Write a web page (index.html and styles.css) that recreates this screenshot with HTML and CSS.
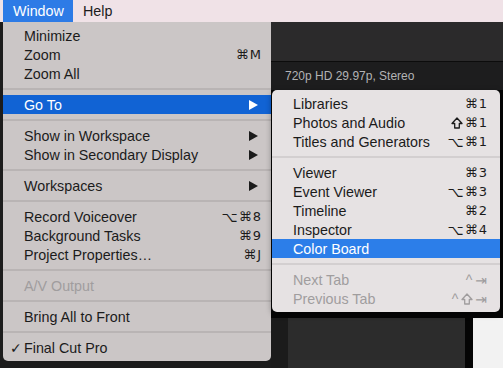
FILE: index.html
```html
<!DOCTYPE html>
<html>
<head>
<meta charset="utf-8">
<link rel="stylesheet" href="styles.css">
</head>
<body>
<div class="screen">
  <div class="menubar">
    <span class="mb-item active">Window</span>
    <span class="mb-item">Help</span>
  </div>
  <div class="app">
    <div class="edge"></div>
    <div class="main">
      <div class="toolbar"></div>
      <div class="infobar">720p HD 29.97p, Stereo</div>
      <div class="lower">
        <div class="lower-left"></div>
        <div class="viewer"></div>
        <div class="gap"></div>
        <div class="white"></div>
      </div>
    </div>
  </div>

  <div class="menu main-menu">
    <div class="row"><span class="label">Minimize</span></div>
    <div class="row"><span class="label">Zoom</span><span class="key">⌘M</span></div>
    <div class="row"><span class="label">Zoom All</span></div>
    <div class="sep"></div>
    <div class="row sel dark"><span class="label">Go To</span><span class="arrow"></span></div>
    <div class="sep"></div>
    <div class="row"><span class="label">Show in Workspace</span><span class="arrow"></span></div>
    <div class="row"><span class="label">Show in Secondary Display</span><span class="arrow"></span></div>
    <div class="sep"></div>
    <div class="row"><span class="label">Workspaces</span><span class="arrow"></span></div>
    <div class="sep"></div>
    <div class="row"><span class="label">Record Voiceover</span><span class="key"><span class="g">⌥</span>⌘8</span></div>
    <div class="row"><span class="label">Background Tasks</span><span class="key">⌘9</span></div>
    <div class="row"><span class="label">Project Properties…</span><span class="key">⌘J</span></div>
    <div class="sep"></div>
    <div class="row off"><span class="label">A/V Output</span></div>
    <div class="sep"></div>
    <div class="row"><span class="label">Bring All to Front</span></div>
    <div class="sep"></div>
    <div class="row"><span class="check">✓</span><span class="label">Final Cut Pro</span></div>
  </div>

  <div class="menu sub-menu">
    <div class="row"><span class="label">Libraries</span><span class="key">⌘1</span></div>
    <div class="row"><span class="label">Photos and Audio</span><span class="key"><svg class="shift" viewBox="0 0 12 12"><path d="M6 1 L11 6.5 H8.3 V11 H3.7 V6.5 H1 Z"/></svg>⌘1</span></div>
    <div class="row"><span class="label">Titles and Generators</span><span class="key"><span class="g">⌥</span>⌘1</span></div>
    <div class="sep"></div>
    <div class="row"><span class="label">Viewer</span><span class="key">⌘3</span></div>
    <div class="row"><span class="label">Event Viewer</span><span class="key"><span class="g">⌥</span>⌘3</span></div>
    <div class="row"><span class="label">Timeline</span><span class="key">⌘2</span></div>
    <div class="row"><span class="label">Inspector</span><span class="key"><span class="g">⌥</span>⌘4</span></div>
    <div class="row sel"><span class="label">Color Board</span></div>
    <div class="sep"></div>
    <div class="row off"><span class="label">Next Tab</span><span class="key"><span class="caret">^</span><span class="g">⇥</span></span></div>
    <div class="row off"><span class="label">Previous Tab</span><span class="key"><span class="caret">^</span><svg class="shift" viewBox="0 0 12 12"><path d="M6 1 L11 6.5 H8.3 V11 H3.7 V6.5 H1 Z"/></svg><span class="g">⇥</span></span></div>
  </div>
</div>
</body>
</html>
```
FILE: styles.css
```css
html, body {
  margin: 0;
  padding: 0;
}
body {
  width: 503px;
  height: 368px;
  overflow: hidden;
  background: #1a1a1a;
  font-family: "Liberation Sans", Arial, sans-serif;
}
.screen {
  position: relative;
  width: 503px;
  height: 368px;
  display: flex;
  flex-direction: column;
}
.menubar {
  height: 22px;
  background: #f0e2e7;
  display: flex;
  align-items: stretch;
  padding-left: 3px;
  font-size: 14.3px;
  color: #1c1c1c;
}
.mb-item {
  display: flex;
  align-items: center;
  padding: 0 9px 0 10px;
}
.mb-item.active {
  background: #2d7be6;
  color: #fff;
  width: 51px;
}
.app {
  flex: 1;
  display: flex;
}
.edge {
  width: 271px;
  background: #1c1c1c;
}
.main {
  flex: 1;
  display: flex;
  flex-direction: column;
}
.toolbar {
  height: 39px;
  background: #2b2a2b;
  border-bottom: 1px solid #0c0c0c;
}
.infobar {
  height: 28px;
  background: #1d1d1e;
  color: #b3b3b5;
  font-size: 12px;
  padding-left: 14px;
  display: flex;
  align-items: center;
}
.lower {
  flex: 1;
  display: flex;
  padding-top: 228px;
  background: #050505;
}
.lower-left {
  width: 17px;
  background: #1b1b1b;
}
.viewer {
  width: 177px;
  background: #2c2c2c;
}
.gap {
  width: 8px;
}
.white {
  flex: 1;
  background: #f2f2f2;
}

.menu {
  position: absolute;
  font-size: 14.3px;
  color: #1b1b1b;
  display: flex;
  flex-direction: column;
  padding: 4px 0;
}
.main-menu {
  left: 3px;
  top: 22px;
  width: 268px;
  background: #cbc6c6;
  border-radius: 0 0 5px 5px;
}
.sub-menu {
  left: 272px;
  top: 90px;
  width: 228px;
  background: #e6e2e3;
  border-radius: 5px;
  box-shadow: 0 2px 6px rgba(0,0,0,0.4);
}
.row {
  height: 19px;
  display: flex;
  align-items: center;
  padding: 0 9px 0 21px;
  position: relative;
}
.sub-menu .row {
  padding-right: 12px;
}
.label {
  flex: 1;
  white-space: nowrap;
}
.key {
  font-family: "DejaVu Sans", sans-serif;
  font-size: 13px;
  letter-spacing: 1px;
  display: flex;
  align-items: center;
}
.g {
  font-size: 14px;
}
.shift {
  width: 12px;
  height: 12px;
  margin-right: 2px;
  fill: none;
  stroke: currentColor;
  stroke-width: 1.3;
  stroke-linejoin: round;
}
.caret {
  font-family: "Liberation Sans", sans-serif;
  font-size: 14px;
  margin-right: 2px;
}
.row.sel {
  background: #2c7ee9;
  color: #fff;
}
.row.sel.dark {
  background: #1163d4;
}
.row.off {
  color: #a09d9e;
}
.arrow {
  width: 0;
  height: 0;
  border-top: 5px solid transparent;
  border-bottom: 5px solid transparent;
  border-left: 9px solid #1b1b1b;
  margin-right: 4px;
}
.row.sel .arrow {
  border-left-color: #fff;
}
.check {
  position: absolute;
  left: 7px;
  font-family: "DejaVu Sans", sans-serif;
  font-size: 14px;
}
.sep {
  height: 12px;
  display: flex;
  align-items: center;
}
.sep::before {
  content: "";
  display: block;
  width: 100%;
  height: 2px;
  background: #b9b4b4;
}
.sub-menu .sep::before {
  background: #d3cfd0;
}
```
